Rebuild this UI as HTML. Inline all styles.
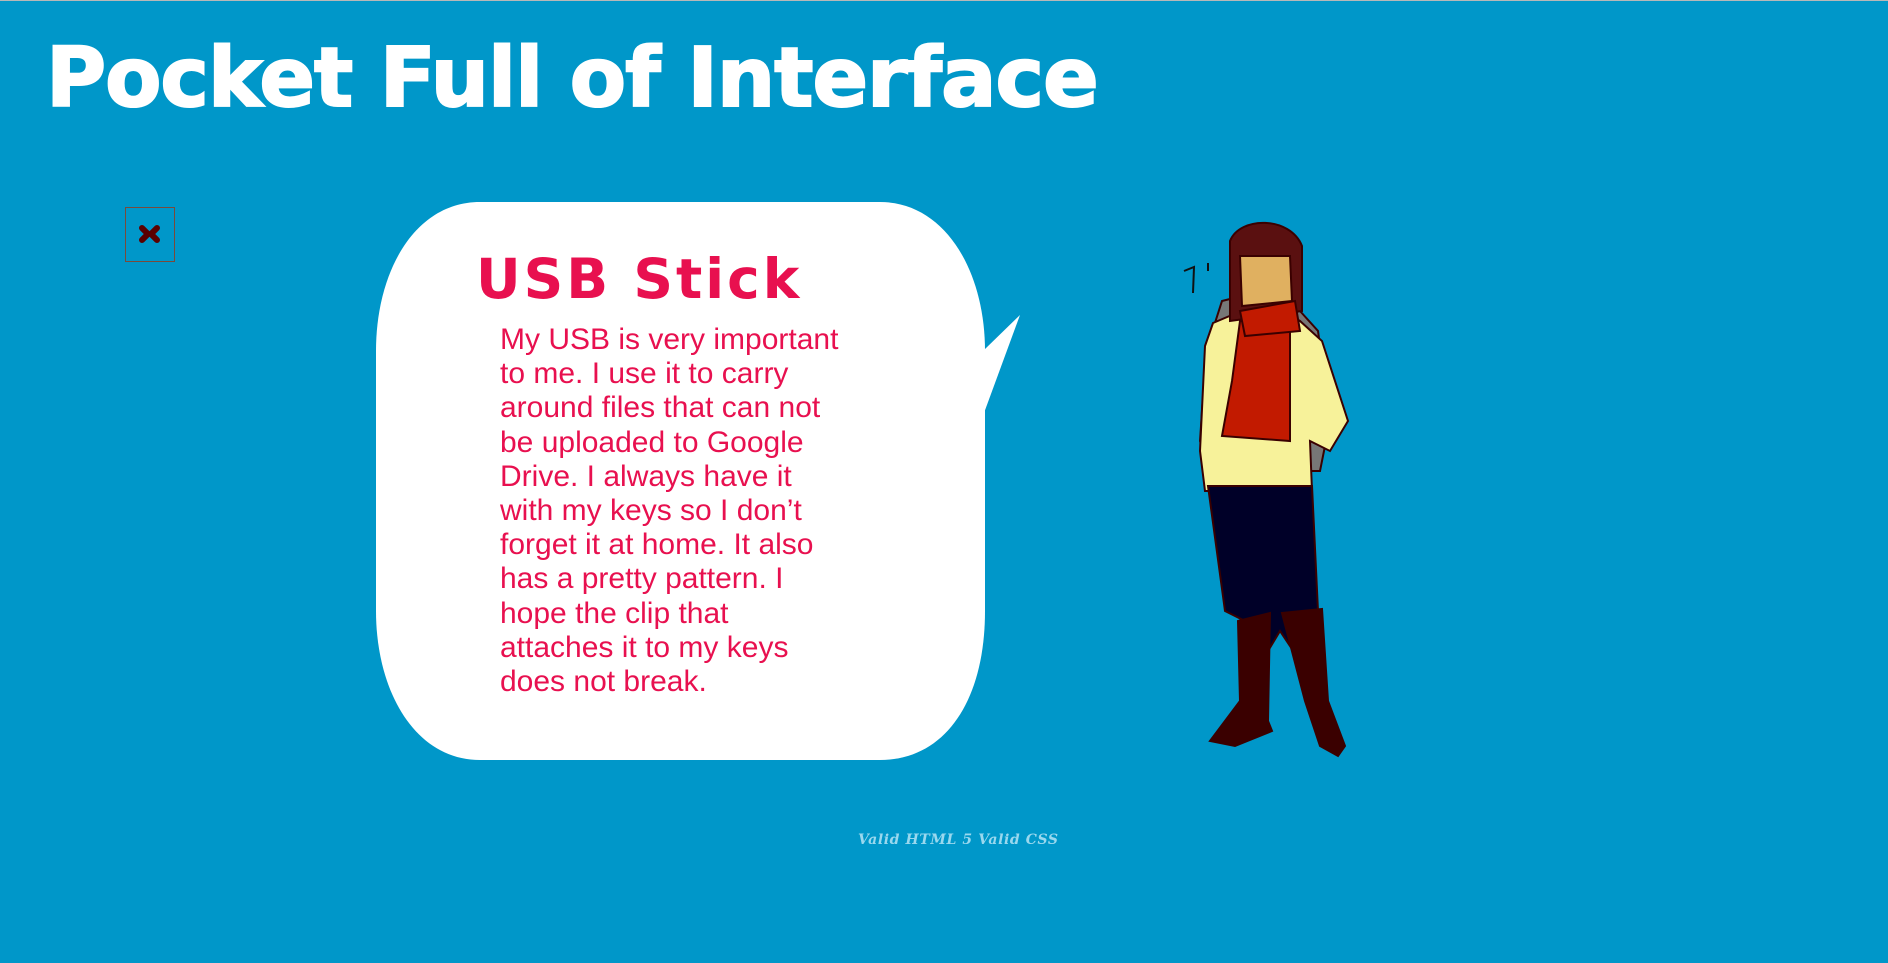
<!DOCTYPE html>
<html><head><meta charset="utf-8"><style>
html,body{margin:0;padding:0}
body{width:1888px;height:962px;background:#0097c9;position:relative;overflow:hidden;border-top:1px solid #b8b8b8;box-sizing:border-box}
.t{position:absolute;left:46px;top:30px;font:bold 82px "DejaVu Sans",sans-serif;color:#fff;white-space:nowrap;transform-origin:0 0;transform:scaleX(1.0);letter-spacing:-1px;-webkit-text-stroke:2px #fff}
.box{position:absolute;left:125px;top:206px;width:50px;height:55px;border:1px solid #7a4a3a;box-sizing:border-box}
.h{position:absolute;left:476px;top:246px;font:bold 55px "DejaVu Sans",sans-serif;color:#e8104f;white-space:nowrap;letter-spacing:3px}
.p{position:absolute;left:500px;top:322px;width:345px;font:30px/34.2px "Liberation Sans",sans-serif;color:#e8104f}
.f{position:absolute;left:858px;top:831px;font:italic bold 14px "DejaVu Serif",serif;color:#9ad8ee;white-space:nowrap;letter-spacing:0.6px}
</style></head><body>
<div class="t">Pocket Full of Interface</div>
<div class="box"><svg width="48" height="53" viewBox="0 0 48 53"><path d="M16 20 L22 26 L16 32 M31 20 L25 26 L31 32" stroke="#5a0000" stroke-width="6" stroke-linecap="round" fill="none"/></svg></div>
<svg style="position:absolute;left:0;top:0" width="1888" height="962">
<path d="M480 201 L880 201 C945 201 985 270 985 350 L985 610 C985 700 945 759 880 759 L480 759 C415 759 376 690 376 610 L376 350 C376 270 415 201 480 201 Z" fill="#fff"/>
<path d="M984 349 L1020 314 L984 412 Z" fill="#fff"/>
<g stroke="#3a0000" stroke-width="2">
<path d="M1222 300 L1262 290 L1300 310 L1318 330 L1330 420 L1320 470 L1210 470 L1200 440 L1206 350 Z" fill="#777"/>
<path d="M1213 322 L1265 300 L1300 320 L1322 340 L1348 420 L1330 450 L1310 440 L1312 490 L1205 490 L1200 450 L1205 345 Z" fill="#f7f29a"/>
<path d="M1240 320 L1290 320 L1290 440 L1222 435 L1232 380 Z" fill="#c21a00"/>
<path d="M1208 485 L1312 485 L1318 610 L1306 620 L1300 660 L1280 630 L1262 660 L1245 620 L1225 610 Z" fill="#000028"/>
<path d="M1238 620 L1270 612 L1268 720 L1272 730 L1235 745 L1210 740 L1240 700 Z" fill="#3a0000"/>
<path d="M1282 612 L1322 608 L1328 700 L1345 745 L1338 755 L1320 745 L1305 700 Z" fill="#3a0000"/>
<path d="M1230 240 C1240 215 1290 215 1302 245 L1302 310 L1230 320 Z" fill="#5a1010"/>
<path d="M1240 255 L1290 255 L1292 300 L1242 305 Z" fill="#e0b060"/>
<path d="M1240 310 L1295 300 L1300 330 L1245 335 Z" fill="#c21a00"/>
</g>
<path d="M1184 270 L1194 266 L1193 292 M1208 262 L1208 270" stroke="#111" stroke-width="2" fill="none"/>
</svg>
<div class="h">USB Stick</div>
<div class="p">My USB is very important to me. I use it to carry around files that can not be uploaded to Google Drive. I always have it with my keys so I don’t forget it at home. It also has a pretty pattern. I hope the clip that attaches it to my keys does not break.</div>
<div class="f">Valid HTML 5 Valid CSS</div>
</body></html>
